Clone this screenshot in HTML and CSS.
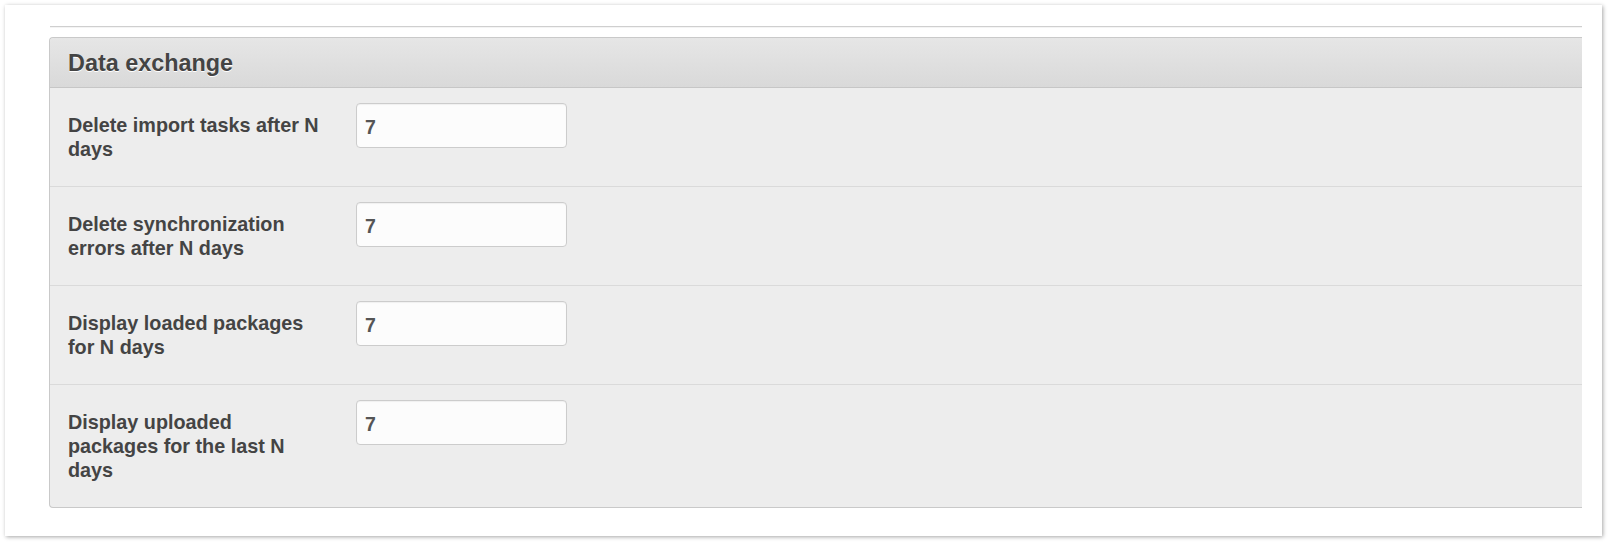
FILE: index.html
```html
<!DOCTYPE html>
<html lang="en">
<head>
    <meta charset="UTF-8">
    <meta name="viewport" content="width=device-width, initial-scale=1.0">
    <title>Settings - Data exchange</title>
    <link rel="stylesheet" href="styles.css">
</head>
<body>
    <div class="page">
        <div class="prev-section"></div>

        <div class="panel">
            <div class="panel-header">Data exchange</div>

            <div class="field-row">
                <label class="field-label" for="import_days">Delete import tasks after N days</label>
                <input class="field-input" type="text" id="import_days" value="7">
            </div>

            <div class="field-row">
                <label class="field-label" for="sync_days">Delete synchronization errors after N days</label>
                <input class="field-input" type="text" id="sync_days" value="7">
            </div>

            <div class="field-row">
                <label class="field-label" for="loaded_days">Display loaded packages for N days</label>
                <input class="field-input" type="text" id="loaded_days" value="7">
            </div>

            <div class="field-row">
                <label class="field-label" for="uploaded_days">Display uploaded packages for the last N days</label>
                <input class="field-input" type="text" id="uploaded_days" value="7">
            </div>
        </div>
    </div>
</body>
</html>
```

FILE: styles.css
```css
body {
    font-family: "Liberation Sans", Arial, sans-serif;
    background-color: #fff;
    margin: 0;
    padding: 0;
    color: #444;
}

.page {
    margin: 5px 6px 6px 5px;
    height: 531px;
    box-sizing: border-box;
    padding: 21px 20px 0 44px;
    background-color: #fff;
    box-shadow: 1px 1px 4px rgba(0, 0, 0, 0.35);
}

.prev-section {
    margin-left: 1px;
    border-bottom: 1px solid #cfcfcf;
    box-shadow: 0 1px 0 #f4f4f4;
}

.panel {
    margin-top: 10px;
    background-color: #ededed;
    border: 1px solid #c9c9c9;
    border-right: none;
    border-radius: 4px 0 0 4px;
}

.panel-header {
    height: 49px;
    line-height: 51px;
    padding-left: 18px;
    font-size: 23.4px;
    font-weight: bold;
    color: #444;
    text-shadow: 0 1px 0 #fff;
    background: linear-gradient(#e6e6e6, #d9d9d9);
    border-bottom: 1px solid #c6c6c6;
    border-radius: 4px 0 0 0;
}

.field-row {
    display: grid;
    grid-template-columns: 252px 211px;
    column-gap: 36px;
    align-items: start;
    padding: 15px 0 25px 18px;
    border-bottom: 1px solid #dadada;
}

.field-row:last-child {
    border-bottom: none;
}

.field-label {
    padding-top: 10px;
    font-size: 19.8px;
    line-height: 24px;
    font-weight: bold;
    color: #444;
}

.field-input {
    box-sizing: border-box;
    width: 211px;
    height: 45px;
    margin: 0;
    padding: 4px 8px 0;
    font-family: "Liberation Sans", Arial, sans-serif;
    font-size: 19.5px;
    font-weight: bold;
    color: #555;
    background-color: #fcfcfc;
    border: 1px solid #cccccc;
    border-radius: 4px;
    box-shadow: inset 0 1px 1px rgba(0, 0, 0, 0.05);
}
```
